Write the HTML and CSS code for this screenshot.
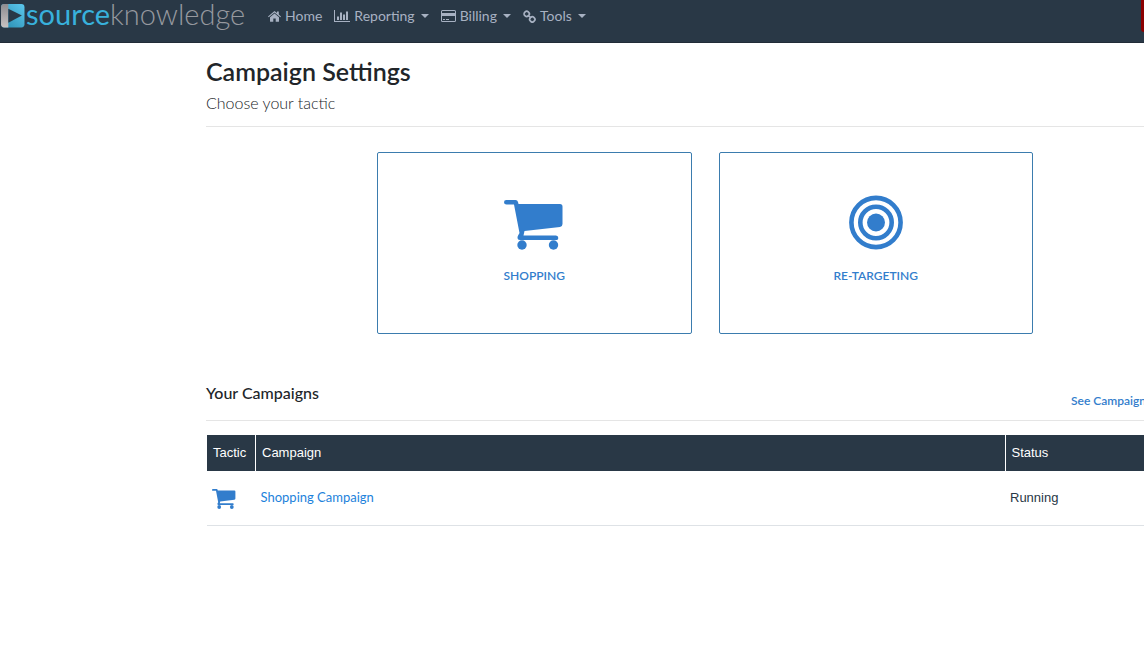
FILE: index.html
```html
<!DOCTYPE html>
<html lang="en">
<head>
<meta charset="utf-8">
<title>Campaign Settings</title>
<link rel="stylesheet" href="styles.css">
</head>
<body>
<svg class="sprite" aria-hidden="true">
  <symbol id="cart" viewBox="0 -4 60 55">
    <path d="M2.500 1H11.500Q13.500 1 14 3L14.500 5H56Q58.500 5 58.500 7.500V25Q58.500 27.500 56 28L20.500 32 19.500 36.500H52Q54.300 36.500 54.300 39T52 41H16Q13.500 41 13.500 38.500 13.500 37 15.500 34L10 5.500H2.500Q0 5.500 0 3.200T2.500 1Z"/>
    <circle cx="18" cy="46" r="4.700"/><circle cx="49.500" cy="46" r="4.700"/>
  </symbol>
</svg>
<header class="navbar">
  <a class="brand" href="#">
    <svg class="brand-mark" viewBox="0 0 24 24" aria-hidden="true">
      <defs>
        <linearGradient id="blue" x1="0" y1="1" x2="1" y2="0"><stop offset="0" stop-color="#2789ad"/><stop offset="1" stop-color="#5cc8ee"/></linearGradient>
        <linearGradient id="grey" x1="0" y1="0" x2="0" y2="1"><stop offset="0" stop-color="#8d8c90"/><stop offset="1" stop-color="#c9c3c2"/></linearGradient>
      </defs>
      <rect x="1" y="1" width="22.500" height="22.500" rx="3" fill="url(#blue)"/>
      <path d="M4 1H8V23.500H4Q1 23.500 1 20.500V4Q1 1 4 1Z" fill="url(#grey)"/>
      <path d="M8 5.500L21 12 8 19Z" fill="#293846"/>
    </svg>
    <span class="brand-name"><span class="brand-source">source</span>knowledge</span>
  </a>
  <nav class="menu">
    <a class="menu-item" href="#">
      <svg class="icon-home" viewBox="0 0 13 11" aria-hidden="true"><path d="M6.500 2.500L11 6.300V10.200Q11 10.800 10.400 10.800H7.700V7.500H5.300V10.800H2.600Q2 10.800 2 10.200V6.300ZM6.500 0L9 2.100V.6H10.800V3.600L13 5.500 12.300 6.300 6.500 1.500.7 6.300 0 5.500Z"/></svg>
      <span>Home</span>
    </a>
    <button class="menu-item" type="button">
      <svg class="icon-chart" viewBox="0 0 16 12" aria-hidden="true"><path d="M0 0H1V11H16V12H0ZM3 6.500H5V10H3ZM6 2.500H8V10H6ZM9 4.500H11V10H9ZM12 1.500H14V10H12Z"/></svg>
      <span>Reporting</span><span class="caret"></span>
    </button>
    <button class="menu-item" type="button">
      <svg class="icon-card" viewBox="0 0 15 12" aria-hidden="true"><path fill-rule="evenodd" d="M1.500 0H13.500Q15 0 15 1.500V10.500Q15 12 13.500 12H1.500Q0 12 0 10.500V1.500Q0 0 1.500 0ZM1 1.500V3H14V1.500Q14 1 13.500 1H1.500Q1 1 1 1.500ZM1 6V10.500Q1 11 1.500 11H13.500Q14 11 14 10.500V6ZM2 9H4V10H2ZM5 9H8V10H5Z"/></svg>
      <span>Billing</span><span class="caret"></span>
    </button>
    <button class="menu-item" type="button">
      <svg class="icon-link" viewBox="0 0 13 13" aria-hidden="true"><g fill="none" stroke="currentColor" stroke-width="1.700"><rect x="1.200" y="1.400" width="5" height="5" rx="2.200" transform="rotate(45 3.700 3.900)"/><rect x="6.800" y="6.900" width="5" height="5" rx="2.200" transform="rotate(45 9.300 9.400)"/><path d="M4.800 5.400L8.200 7.900"/></g></svg>
      <span>Tools</span><span class="caret"></span>
    </button>
  </nav>
  <button class="alert-button" type="button" aria-label="Alerts"></button>
</header>
<main class="content">
  <h1 class="title">Campaign Settings</h1>
  <p class="subtitle">Choose your tactic</p>
  <div class="tactics">
    <button class="tactic" type="button">
      <svg class="tactic-cart" aria-hidden="true"><use href="#cart"/></svg>
      <span>SHOPPING</span>
    </button>
    <button class="tactic" type="button">
      <svg class="tactic-target" viewBox="0 0 54 54" aria-hidden="true"><circle cx="27" cy="27" r="9"/><g fill="none" stroke="currentColor" stroke-width="4.600"><circle cx="27" cy="27" r="15.700"/><circle cx="27" cy="27" r="24.600"/></g></svg>
      <span>RE-TARGETING</span>
    </button>
  </div>
  <div class="section-head">
    <h2 class="section-title">Your Campaigns</h2>
    <a class="see-link" href="#">See Campaigns</a>
  </div>
  <table class="campaigns">
    <thead><tr><th class="col-tactic">Tactic</th><th>Campaign</th><th class="col-status">Status</th></tr></thead>
    <tbody><tr>
      <td><svg class="row-cart" role="img" aria-label="Shopping"><use href="#cart"/></svg></td>
      <td><a class="campaign-link" href="#">Shopping Campaign</a></td>
      <td class="status">Running</td>
    </tr></tbody>
  </table>
</main>
</body>
</html>
```

FILE: styles.css
```css
* { box-sizing: border-box; }
html { overflow: hidden; }
body {
  margin: 0;
  overflow: hidden;
  min-height: 100vh;
  background: #fff;
  color: #212529;
  font-family: Lato, "Liberation Sans", sans-serif;
}
svg { fill: currentColor; flex: none; }
button { font: inherit; cursor: pointer; }
a { text-decoration: none; }
.sprite { position: absolute; width: 0; height: 0; }

.navbar {
  display: flex;
  align-items: flex-start;
  height: 43px;
  margin-right: -60px;
  background: #293846;
  border-bottom: 1px solid #212c38;
}
.brand { display: flex; align-items: flex-start; width: 268px; }
.brand-mark { width: 25px; height: 25px; margin-top: 3px; }
.brand-name {
  padding-left: 1px;
  color: #96999f;
  font-size: 29px;
  font-weight: 300;
  line-height: 28px;
}
.brand-source { color: #38b1dc; font-weight: 400; }
.menu { display: flex; gap: 12px; padding-top: 6px; }
.menu-item {
  display: flex;
  align-items: center;
  gap: 4px;
  padding: 0;
  border: 0;
  background: none;
  color: #a7b1c2;
  font-size: 14px;
  line-height: 20px;
}
.icon-home { width: 13px; height: 11px; }
.icon-chart { width: 16px; height: 12px; }
.icon-card { width: 15px; height: 12px; }
.icon-link { width: 13px; height: 13px; }
.caret {
  margin-left: 2px;
  border: 4px solid transparent;
  border-top-color: currentColor;
  border-bottom: 0;
}
.alert-button {
  width: 63px;
  height: 32px;
  margin-left: auto;
  border: 0;
  border-radius: 0 0 3px 3px;
  background: #8b0000;
}

.content { margin: 0 -60px 0 206px; padding-top: 12px; }
.title { margin: 0; font-size: 25px; font-weight: 600; line-height: 32px; }
.subtitle {
  margin: 0;
  padding: 5px 0 12px;
  border-bottom: 1px solid #e5e5e5;
  font-size: 16px;
  font-weight: 300;
  line-height: 22px;
}
.tactics {
  display: grid;
  grid-template-columns: 1fr 1fr;
  gap: 27px;
  max-width: 656px;
  margin: 25px auto 0;
}
.tactic {
  display: flex;
  flex-direction: column;
  align-items: center;
  gap: 16px;
  padding: 42px 0 47px;
  border: 1px solid #3b7cae;
  border-radius: 2px;
  background: #fff;
  color: #327dcc;
  font-size: 12px;
  font-weight: 600;
  line-height: 20px;
}
.tactic-cart { width: 60px; height: 55px; }
.tactic-target { width: 54px; height: 55px; }
.section-head {
  display: flex;
  justify-content: space-between;
  margin-top: 47px;
  padding-bottom: 9px;
  border-bottom: 1px solid #e5e5e5;
}
.section-title { margin: 0; font-size: 16px; font-weight: 500; line-height: 24px; }
.see-link {
  width: 133px;
  padding-top: 10px;
  color: #327dcc;
  font-size: 12px;
  font-weight: 600;
  line-height: 20px;
}
.campaigns {
  width: 100%;
  margin-top: 14px;
  border-collapse: collapse;
  table-layout: fixed;
  font-family: "Liberation Sans", sans-serif;
  font-size: 13px;
  line-height: 20px;
  text-align: left;
}
.campaigns th {
  padding: 8px 6px;
  border-left: 1px solid #fff;
  background: #293846;
  color: #fff;
  font-weight: 400;
}
.campaigns td { height: 54px; padding: 0 5px; border-bottom: 1px solid #dee2e6; }
.col-tactic { width: 49px; }
.col-status { width: 199px; }
.row-cart { display: block; width: 24px; height: 22px; color: #327dcc; }
.campaign-link { color: #1d82db; font-family: Lato, sans-serif; }
.status { color: #293846; }
```
